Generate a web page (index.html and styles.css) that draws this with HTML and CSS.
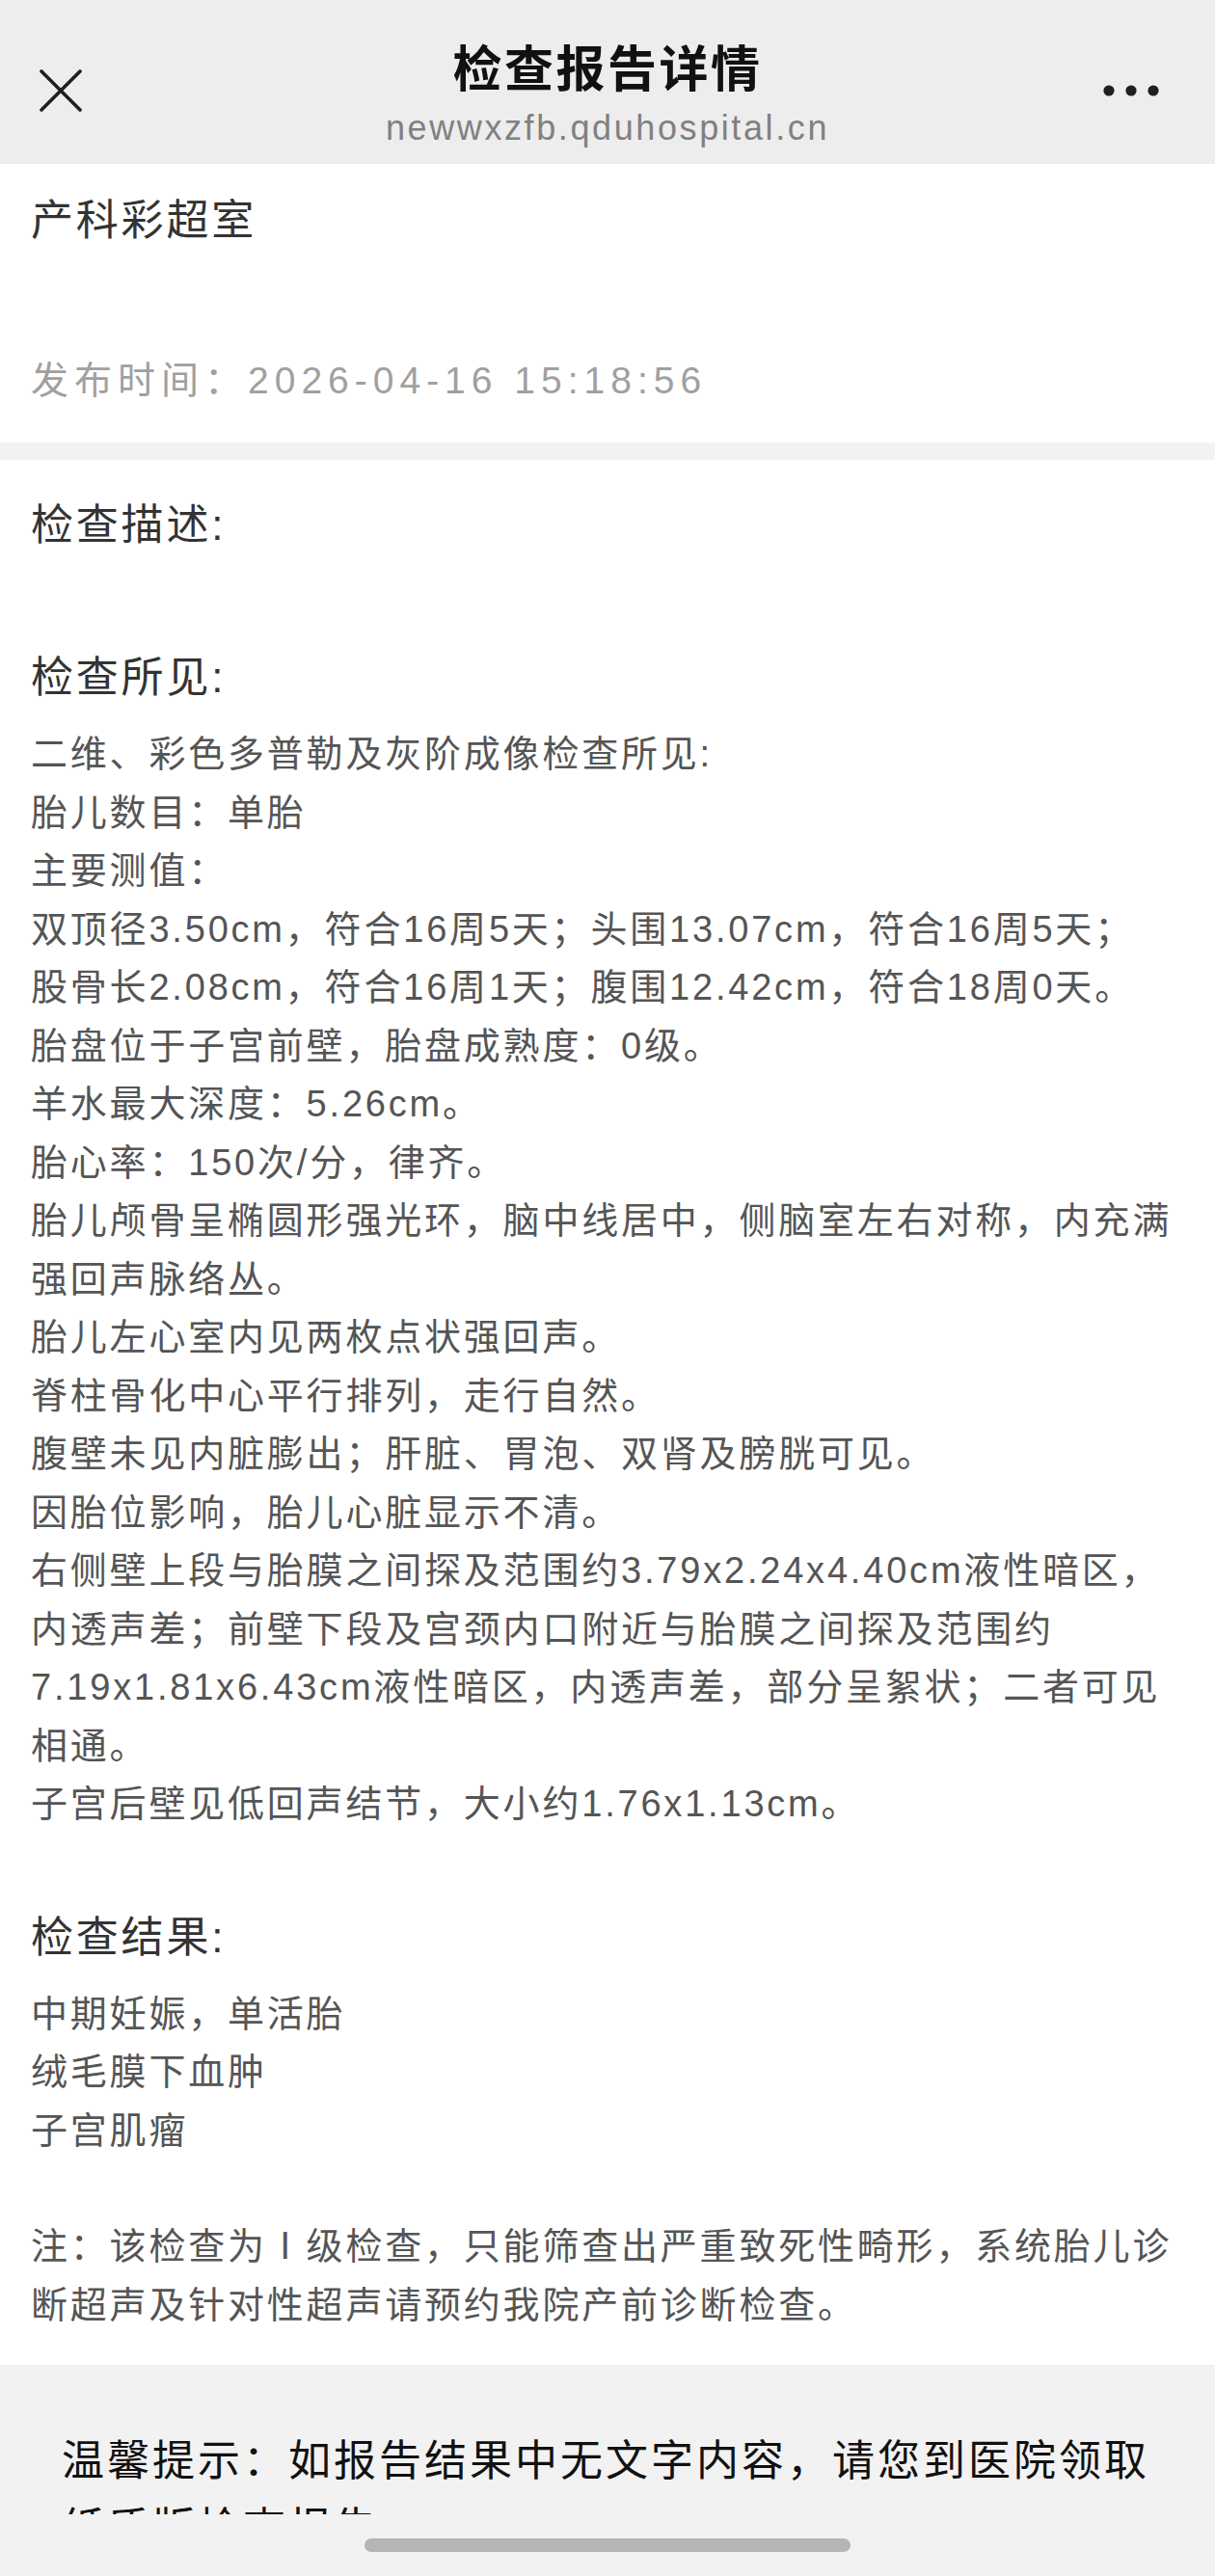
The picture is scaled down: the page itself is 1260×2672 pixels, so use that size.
FILE: index.html
```html
<!DOCTYPE html>
<html lang="zh-CN">
<head>
<meta charset="utf-8">
<title>检查报告详情</title>
<link rel="stylesheet" href="styles.css">
</head>
<body>
<header class="topbar">
  <div class="topbar-left">
    <svg class="close-icon" width="44" height="44" viewBox="0 0 44 44" aria-label="关闭">
      <path d="M2 2 L42 42 M42 2 L2 42" stroke="#1f1f1f" stroke-width="3.6" stroke-linecap="round" fill="none"/>
    </svg>
  </div>
  <div class="topbar-center">
    <div class="topbar-title">检查报告详情</div>
    <div class="topbar-url">newwxzfb.qduhospital.cn</div>
  </div>
  <div class="topbar-right">
    <svg class="more-icon" width="58" height="12" viewBox="0 0 58 12" aria-label="更多">
      <circle cx="6" cy="6" r="5.6" fill="#1f1f1f"/>
      <circle cx="29" cy="6" r="5.6" fill="#1f1f1f"/>
      <circle cx="52" cy="6" r="5.6" fill="#1f1f1f"/>
    </svg>
  </div>
</header>

<section class="card head-card">
  <div class="dept">产科彩超室</div>
  <div class="pubtime">发布时间：2026-04-16 15:18:56</div>
</section>

<section class="card report-card">
  <div class="field">
    <div class="field-title">检查描述:</div>
    <div class="field-body field-empty"></div>
  </div>
  <div class="field">
    <div class="field-title">检查所见:</div>
    <div class="field-body">
      <p>二维、彩色多普勒及灰阶成像检查所见:</p>
      <p>胎儿数目：单胎</p>
      <p>主要测值：</p>
      <p>双顶径3.50cm，符合16周5天；头围13.07cm，符合16周5天；</p>
      <p>股骨长2.08cm，符合16周1天；腹围12.42cm，符合18周0天。</p>
      <p>胎盘位于子宫前壁，胎盘成熟度：0级。</p>
      <p>羊水最大深度：5.26cm。</p>
      <p>胎心率：150次/分，律齐。</p>
      <p>胎儿颅骨呈椭圆形强光环，脑中线居中，侧脑室左右对称，内充满强回声脉络丛。</p>
      <p>胎儿左心室内见两枚点状强回声。</p>
      <p>脊柱骨化中心平行排列，走行自然。</p>
      <p>腹壁未见内脏膨出；肝脏、胃泡、双肾及膀胱可见。</p>
      <p>因胎位影响，胎儿心脏显示不清。</p>
      <p>右侧壁上段与胎膜之间探及范围约3.79x2.24x4.40cm液性暗区，内透声差；前壁下段及宫颈内口附近与胎膜之间探及范围约7.19x1.81x6.43cm液性暗区，内透声差，部分呈絮状；二者可见相通。</p>
      <p>子宫后壁见低回声结节，大小约1.76x1.13cm。</p>
    </div>
  </div>
  <div class="field field-last">
    <div class="field-title">检查结果:</div>
    <div class="field-body">
      <p>中期妊娠，单活胎</p>
      <p>绒毛膜下血肿</p>
      <p>子宫肌瘤</p>
    </div>
  </div>
  <p class="note">注：该检查为Ⅰ级检查，只能筛查出严重致死性畸形，系统胎儿诊断超声及针对性超声请预约我院产前诊断检查。</p>
</section>

<section class="tips">
  <p class="tips-text">温馨提示：如报告结果中无文字内容，请您到医院领取纸质版检查报告。</p>
</section>

<div class="home-bar">
  <div class="home-indicator"></div>
</div>
</body>
</html>
```

FILE: styles.css
```css
html, body {
  margin: 0;
  padding: 0;
}

body {
  background: #f2f2f2;
  font-family: "Liberation Sans", "Noto Sans CJK SC", sans-serif;
  color: #555;
}

p {
  margin: 0;
}

/* ---------- top bar ---------- */
.topbar {
  height: 170px;
  background: #ededed;
  display: grid;
  grid-template-columns: 150px 1fr 150px;
  align-items: start;
}

.topbar-left {
  padding: 72px 0 0 41px;
}

.close-icon {
  display: block;
}

.topbar-center {
  padding-top: 43px;
  text-align: center;
}

.topbar-title {
  font-size: 51px;
  letter-spacing: 2.5px;
  line-height: 60px;
  font-weight: 700;
  color: #111;
}

.topbar-url {
  margin-top: 8px;
  font-family: "Liberation Sans", sans-serif;
  font-size: 36px;
  letter-spacing: 2.6px;
  line-height: 44px;
  color: #808080;
}

.topbar-right {
  padding: 88px 58px 0 0;
  display: flex;
  justify-content: flex-end;
}

.more-icon {
  display: block;
}

/* ---------- cards ---------- */
.card {
  background: #fff;
  padding-left: 32px;
  padding-right: 32px;
}

.head-card {
  padding-top: 29px;
  padding-bottom: 39px;
  margin-bottom: 18px;
}

.dept {
  font-size: 44px;
  letter-spacing: 2.8px;
  line-height: 60px;
  color: #333;
}

.pubtime {
  margin-top: 111px;
  font-size: 39px;
  letter-spacing: 6px;
  line-height: 50px;
  color: #a0a0a0;
}

.report-card {
  padding-top: 38px;
  padding-bottom: 32px;
}

.field {
  padding-bottom: 78px;
}

.field-last {
  padding-bottom: 0;
}

.field-title {
  font-size: 44px;
  letter-spacing: 2.8px;
  line-height: 60px;
  color: #333;
  padding-bottom: 19px;
}

.field-empty {
  min-height: 1px;
}

.field-body p,
.note {
  font-size: 38px;
  letter-spacing: 2.8px;
  line-height: 60.5px;
  color: #555;
}

.note {
  margin-top: 60px;
}

/* ---------- tips ---------- */
.tips {
  background: #f2f2f2;
  padding: 65px 64px 200px;
}

.tips-text {
  font-size: 44px;
  letter-spacing: 3px;
  line-height: 70px;
  color: #111;
}

/* ---------- home indicator overlay ---------- */
.home-bar {
  position: fixed;
  left: 0;
  right: 0;
  bottom: 0;
  height: 64px;
  background: #f2f2f2;
  display: flex;
  justify-content: center;
  padding-top: 25px;
  box-sizing: border-box;
}

.home-indicator {
  width: 504px;
  height: 14px;
  border-radius: 7px;
  background: #b5b5b5;
}
```
